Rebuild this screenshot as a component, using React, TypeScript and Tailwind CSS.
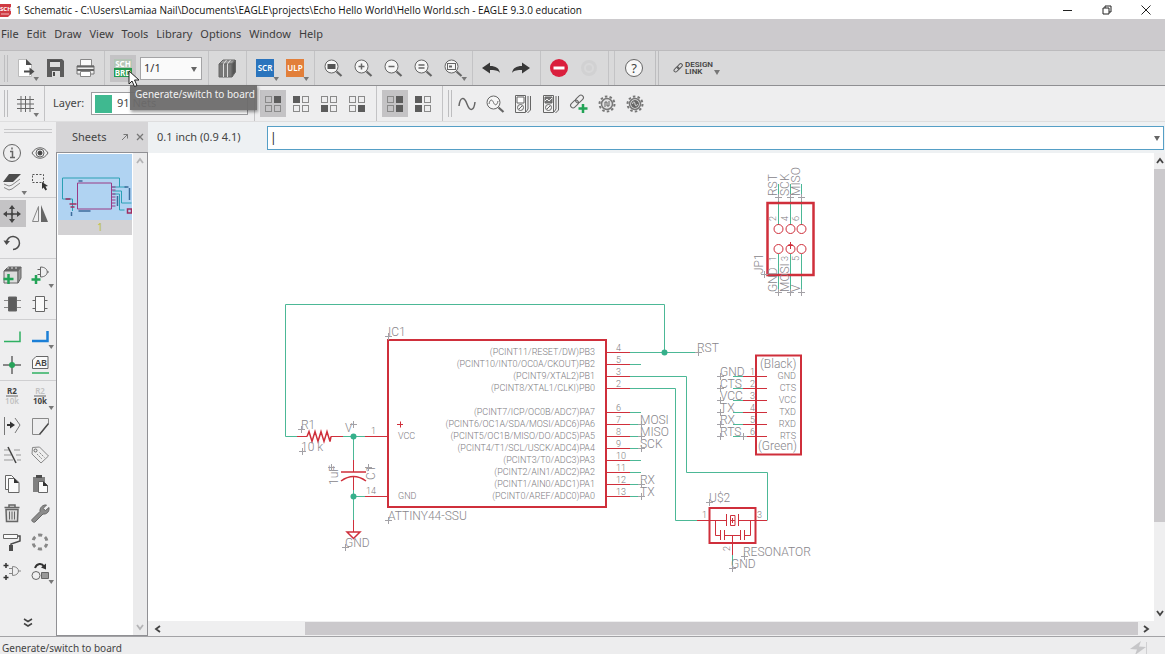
import type { ReactNode } from 'react'
import clsx from 'clsx'

const MENUS = ['File', 'Edit', 'Draw', 'View', 'Tools', 'Library', 'Options', 'Window', 'Help']

const CHIP_PINS = [
  { y: 352, no: '4', name: '(PCINT11/RESET/DW)PB3' },
  { y: 364, no: '5', name: '(PCINT10/INT0/OC0A/CKOUT)PB2' },
  { y: 376, no: '3', name: '(PCINT9/XTAL2)PB1' },
  { y: 388, no: '2', name: '(PCINT8/XTAL1/CLKI)PB0' },
  { y: 412, no: '6', name: '(PCINT7/ICP/OC0B/ADC7)PA7' },
  { y: 424, no: '7', name: '(PCINT6/OC1A/SDA/MOSI/ADC6)PA6', net: 'MOSI' },
  { y: 436, no: '8', name: '(PCINT5/OC1B/MISO/DO/ADC5)PA5', net: 'MISO' },
  { y: 448, no: '9', name: '(PCINT4/T1/SCL/USCK/ADC4)PA4', net: 'SCK' },
  { y: 460, no: '10', name: '(PCINT3/T0/ADC3)PA3' },
  { y: 472, no: '11', name: '(PCINT2/AIN1/ADC2)PA2' },
  { y: 484, no: '12', name: '(PCINT1/AIN0/ADC1)PA1', net: 'RX' },
  { y: 496, no: '13', name: '(PCINT0/AREF/ADC0)PA0', net: 'TX' },
]

const FTDI_PINS = [
  { y: 376, no: '1', net: 'GND', name: 'GND' },
  { y: 388, no: '2', net: 'CTS', name: 'CTS' },
  { y: 400, no: '3', net: 'VCC', name: 'VCC' },
  { y: 412, no: '4', net: 'TX', name: 'TXD' },
  { y: 424, no: '5', net: 'RX', name: 'RXD' },
  { y: 436, no: '6', net: 'RTS', name: 'RTS' },
]

const ISP_COLS = [
  { x: 778, top: 'RST', topNo: '2', bottomNo: '1', bottom: 'GND' },
  { x: 790, top: 'SCK', topNo: '4', bottomNo: '3', bottom: 'MOSI' },
  { x: 801, top: 'MISO', topNo: '6', bottomNo: '5', bottom: 'V' },
]

function Icon({ caret, children }: { caret?: boolean; children: ReactNode }) {
  return (
    <svg viewBox="0 0 24 24" className="size-6 shrink-0 overflow-visible" fill="none" stroke="#666" strokeWidth="1" aria-hidden>
      {children}
      {caret && <path d="M20.5 21h5.5l-2.75 4z" fill="#777" stroke="none" />}
    </svg>
  )
}

function Tool({
  label,
  active,
  caret,
  children,
}: {
  label: string
  active?: boolean
  caret?: boolean
  children: ReactNode
}) {
  return (
    <button
      type="button"
      aria-label={label}
      className={clsx('flex h-[27px] w-[26px] shrink-0 items-center justify-center', active && 'bg-[#c4c3c5]')}
    >
      <Icon caret={caret}>{children}</Icon>
    </button>
  )
}

function Sep() {
  return (
    <div className="flex h-full w-3 shrink-0 justify-center">
      <div className="w-px bg-[#c3c3c5]" />
    </div>
  )
}

function Grip({ className }: { className?: string }) {
  return <div className={clsx('h-[27px] w-1 shrink-0 border-x border-[#bdbdbf]', className)} />
}

function Lens({ children }: { children: ReactNode }) {
  return (
    <>
      <circle cx="10.5" cy="10.5" r="6.5" fill="#f6f6f6" />
      <path d="M15.5 15.5l5 4.500" strokeWidth="2.200" />
      {children}
    </>
  )
}

function Quad({ on }: { on: number[] }) {
  return (
    <>
      {[0, 1, 2, 3].map((i) => (
        <rect
          key={i}
          x={i % 2 ? 13.5 : 4.5}
          y={i > 1 ? 13.5 : 4.5}
          width="6"
          height="6"
          fill={on.includes(i) ? '#5c5c5c' : 'none'}
          stroke={on.includes(i) ? '#5c5c5c' : '#8a8a8a'}
        />
      ))}
    </>
  )
}

function Gear() {
  return (
    <>
      <circle cx="12" cy="12" r="7.500" stroke="#777" strokeWidth="2" strokeDasharray="2.500 2.212" />
      <circle cx="12" cy="12" r="5.500" fill="#e2e2e3" stroke="#777" strokeWidth="1.500" />
    </>
  )
}

function Meter({ dark }: { dark?: boolean }) {
  return (
    <>
      <path d="M4.500 3.500h10v17h-10z" fill="#f4f4f4" />
      <path d="M6 5h7v6h-7z" fill={dark ? '#777' : '#fff'} />
      {dark && <path d="M6 9l2-2 2 2 3-3" stroke="#eee" />}
      <circle cx="9.500" cy="15.500" r="3" />
      <path d="M8 17l3-3M17 4v13l-2 3M19.500 4v14l-3 3" />
    </>
  )
}

function LinkGlyph() {
  return (
    <>
      <rect x="3" y="9.500" width="9" height="5" rx="2.500" transform="rotate(-45 7.500 12)" />
      <rect x="8" y="4.500" width="9" height="5" rx="2.500" transform="rotate(-45 12.500 7)" />
    </>
  )
}

function SourceBadge({ text, fill }: { text: string; fill: string }) {
  return (
    <>
      <rect x="3" y="3" width="18" height="18" fill={fill} stroke="none" />
      <text x="12" y="15" textAnchor="middle" fontSize="8" fontWeight="600" fill="#fff" stroke="none">
        {text}
      </text>
    </>
  )
}

function TitleBar() {
  return (
    <header className="flex h-[19px] shrink-0 items-center bg-white text-[#111]">
      <svg viewBox="0 0 12 16" className="mr-1 h-4 w-3" aria-hidden>
        <path d="M0 2h11v10l-3 3H0z" fill="#cf3a42" />
        <text x="0" y="9" fontSize="6" fontWeight="700" fill="#fff">
          SCH
        </text>
        <path d="M1 12h8" stroke="#f2b5b8" />
      </svg>
      <h1 className="grow truncate font-['Open_Sans',sans-serif] text-[10px] leading-4">
        1 Schematic - C:\Users\Lamiaa Nail\Documents\EAGLE\projects\Echo Hello World\Hello World.sch - EAGLE 9.3.0 education
      </h1>
      <div className="flex h-full">
        <button type="button" aria-label="Minimize" className="flex w-[39px] items-center justify-center">
          <svg viewBox="0 0 10 10" className="size-[10px]" stroke="#222" aria-hidden>
            <path d="M0 5.500h9" />
          </svg>
        </button>
        <button type="button" aria-label="Restore" className="flex w-[39px] items-center justify-center">
          <svg viewBox="0 0 10 10" className="size-[10px]" fill="none" stroke="#222" aria-hidden>
            <path d="M1 3h6v6H1zM3 3V1h6v6H7" />
          </svg>
        </button>
        <button type="button" aria-label="Close" className="flex w-[39px] items-center justify-center">
          <svg viewBox="0 0 10 10" className="size-[10px]" stroke="#222" aria-hidden>
            <path d="M.5.5l9 9M9.500.5l-9 9" />
          </svg>
        </button>
      </div>
    </header>
  )
}

function MainToolbar() {
  return (
    <div className="flex h-[35px] shrink-0 items-center border-b border-[#8f8f92] bg-[#d9d9da]">
      <Grip className="mr-1 ml-1" />
      <div className="flex items-center gap-1">
        <Tool label="New" caret>
          <path d="M5.500 3.500h8l5 5v12h-13z" fill="#fff" stroke="#bbb" />
          <path d="M13 3v6h6z" fill="#4c4c4c" stroke="none" />
          <path d="M11 15.500h7" stroke="#4c4c4c" strokeWidth="2" />
          <path d="M16.500 11.500l5 4-5 4z" fill="#4c4c4c" stroke="none" />
        </Tool>
        <Tool label="Save">
          <path d="M4 3h15l2 2v16H4z" fill="#5c5c5c" stroke="none" />
          <path d="M7 4h10v7H7zM9 15h8v6H9z" fill="#ddd" stroke="none" />
          <path d="M7 5h10M11 16v4" stroke="#4c4c4c" strokeWidth="2" />
        </Tool>
        <Tool label="Print">
          <path d="M7.500 3.500h11v7h-11z" fill="#fafafa" stroke="#888" />
          <path d="M4 10h17v8H4z" fill="#eee" stroke="#777" />
          <path d="M4 10.500h17M4 14h17" stroke="#666" strokeWidth="2" />
          <path d="M7.500 15.500h10v5h-10z" fill="#fff" stroke="#888" />
        </Tool>
      </div>
      <Sep />
      <div className="relative flex items-center gap-1">
        <Tool label="Generate/switch to board" active>
          <rect x="3" y="3" width="18" height="9" fill="#b4c5b6" stroke="none" />
          <rect x="3" y="12" width="18" height="9" fill="#259a4d" stroke="none" />
          <text x="12" y="10.500" textAnchor="middle" fontSize="8" fontWeight="700" fill="#fff" stroke="none">
            SCH
          </text>
          <text x="12" y="19.500" textAnchor="middle" fontSize="8" fontWeight="700" fill="#fff" stroke="none">
            BRD
          </text>
        </Tool>
        <div className="relative">
          <select
            aria-label="Sheet"
            className="block h-[23px] w-[62px] appearance-none border border-[#a4a4a6] bg-[#fafafa] pl-[3px] text-[11px] text-[#333]"
          >
            <option>1/1</option>
          </select>
          <svg viewBox="0 0 6 5" className="pointer-events-none absolute top-[10px] right-[5px] h-[5px] w-[6px]" aria-hidden>
            <path d="M0 0h6L3 5z" fill="#666" />
          </svg>
        </div>
        <div
          role="tooltip"
          className="absolute top-[30px] left-5 z-10 h-[25px] w-[127px] bg-[#6d6b6c]/95 px-[5px] text-[10px] leading-[18px] whitespace-nowrap text-[#f2f2f2] shadow-[1px_2px_3px_rgba(0,0,0,0.4)]"
        >
          Generate/switch to board
        </div>
        <svg viewBox="0 0 12 18" className="absolute top-[15px] left-[18px] z-20 h-[18px] w-3" aria-hidden>
          <path d="M1 1v13l3-3 2.500 5.500 2.500-1-2.500-5.500h4.500z" fill="#fff" stroke="#222" />
        </svg>
      </div>
      <Sep />
      <Tool label="Library manager">
        <path d="M4 8l4-4h12l-3 4z" fill="#999" stroke="#666" />
        <path d="M4 8h13v13H4z" fill="#777" />
        <path d="M17 8l3.500-4v12L17 21z" fill="#555" />
        <path d="M8.500 8v13M12.500 8v13M8.500 8l3-4M12.500 8l3-4" stroke="#ddd" />
      </Tool>
      <Sep />
      <div className="flex items-center gap-1">
        <Tool label="Run script" caret>
          <SourceBadge text="SCR" fill="#2a74bd" />
        </Tool>
        <Tool label="Run ULP" caret>
          <SourceBadge text="ULP" fill="#e27f3a" />
        </Tool>
      </div>
      <Sep />
      <div className="flex items-center gap-1">
        <Tool label="Zoom to fit">
          <Lens>
            <rect x="6.500" y="8" width="8" height="5" fill="#555" stroke="none" />
          </Lens>
        </Tool>
        <Tool label="Zoom in">
          <Lens>
            <path d="M7.500 10.500h6M10.500 7.500v6" strokeWidth="1.500" />
          </Lens>
        </Tool>
        <Tool label="Zoom out">
          <Lens>
            <path d="M7.500 10.500h6" strokeWidth="1.500" />
          </Lens>
        </Tool>
        <Tool label="Redraw">
          <Lens>
            <path d="M7.500 9h6M7.500 12h6" strokeWidth="1.500" />
          </Lens>
        </Tool>
        <Tool label="Zoom select" caret>
          <Lens>
            <rect x="6.500" y="7.500" width="8" height="6" />
            <path d="M8 10.500h3" strokeWidth="2" />
          </Lens>
        </Tool>
      </div>
      <Sep />
      <div className="flex items-center gap-1">
        <Tool label="Undo">
          <path d="M3 12l8-5.500v3.500c6 0 9 2 10 7-2-3-6-3-10-3v3.500z" fill="#383838" stroke="none" />
        </Tool>
        <Tool label="Redo">
          <path d="M21 12l-8-5.500v3.500c-6 0-9 2-10 7 2-3 6-3 10-3v3.500z" fill="#383838" stroke="none" />
        </Tool>
      </div>
      <Sep />
      <div className="flex items-center gap-1">
        <Tool label="Stop">
          <circle cx="12" cy="12" r="9" fill="#da1f3d" stroke="none" />
          <path d="M6.500 12h11" stroke="#fff" strokeWidth="3" />
        </Tool>
        <Tool label="Go">
          <circle cx="12" cy="12" r="8" fill="#d1d1d2" stroke="none" />
          <circle cx="12" cy="12" r="4" stroke="#d8d8d9" strokeWidth="2" />
        </Tool>
      </div>
      <Sep />
      <div className="mr-[6px] h-full w-px bg-[#c3c3c5]" />
      <Tool label="Help">
        <circle cx="12" cy="12" r="8.500" fill="#f8f8f8" />
        <text x="12" y="16.500" textAnchor="middle" fontSize="13" fill="#444" stroke="none">
          ?
        </text>
      </Tool>
      <Grip className="ml-2 h-full" />
      <button type="button" className="ml-[14px] flex items-center">
        <svg viewBox="2 2 17 17" className="size-[11px]" fill="none" stroke="#555" strokeWidth="1.500" aria-hidden>
          <LinkGlyph />
        </svg>
        <span className="ml-px text-left font-['Roboto',sans-serif] text-[8px] leading-[7px] font-semibold text-[#444]">
          DESIGN
          <br />
          LINK
        </span>
        <svg viewBox="0 0 6 5" className="mt-2 ml-px h-[5px] w-[6px]" aria-hidden>
          <path d="M0 0h6L3 5z" fill="#777" />
        </svg>
      </button>
    </div>
  )
}

function ParameterBar() {
  return (
    <div className="flex h-9 shrink-0 items-center border-b border-[#dededf] bg-[#eeeeef]">
      <Grip className="mr-1 ml-1" />
      <Tool label="Grid" caret>
        <path d="M8 4v16M12.500 4v16M17 4v16M4 7.500h17M4 12h17M4 16.500h17" />
      </Tool>
      <Sep />
      <label htmlFor="layer" className="ml-[3px] w-[38px] text-[11px] text-[#444]">
        Layer:
      </label>
      <div className="relative flex h-[23px] w-[157px] items-center border border-[#9c9c9f] bg-white">
        <div className="mx-[3px] h-[18px] w-[17px] shrink-0 bg-[#3fb990]" />
        <select id="layer" className="h-full grow appearance-none pl-[2px] text-[11px] text-[#444]">
          <option>91 Nets</option>
        </select>
      </div>
      <Sep />
      <div className="flex items-center gap-[2px]">
        <Tool label="Top right" active>
          <Quad on={[1]} />
        </Tool>
        <Tool label="Top left">
          <Quad on={[0]} />
        </Tool>
        <Tool label="Bottom left">
          <Quad on={[2]} />
        </Tool>
        <Tool label="Bottom right">
          <Quad on={[3]} />
        </Tool>
      </div>
      <Sep />
      <div className="flex items-center gap-[2px]">
        <Tool label="Right side" active>
          <Quad on={[1, 3]} />
        </Tool>
        <Tool label="Left side">
          <Quad on={[0, 2]} />
        </Tool>
      </div>
      <Sep />
      <Grip className="mr-[2px]" />
      <div className="flex items-center gap-[2px]">
        <Tool label="Simulate">
          <path d="M4 14c1-9 5-10 8-2s7 7 8-2" strokeWidth="1.500" />
        </Tool>
        <Tool label="Probe">
          <Lens>
            <path d="M6 12c1-5 3-5 4.500-1.500s3.500 3 4.500-1.500" />
          </Lens>
        </Tool>
        <Tool label="Voltage probe">
          <Meter />
        </Tool>
        <Tool label="Current probe">
          <Meter dark />
        </Tool>
        <Tool label="Add model">
          <LinkGlyph />
          <path d="M16 12v9M11.500 16.500h9" stroke="#22a356" strokeWidth="2.500" />
        </Tool>
        <Tool label="Simulation setup">
          <Gear />
          <path d="M10 15V10h2v4h2V9" />
        </Tool>
        <Tool label="Simulation options">
          <Gear />
          <circle cx="12" cy="12" r="3.500" fill="#666" />
          <path d="M9.500 12c1-3 2-3 2.500 0s2 2 2.500 0" stroke="#ddd" />
        </Tool>
      </div>
    </div>
  )
}

function PaletteRow({ children }: { children: ReactNode }) {
  return <div className="flex h-[29px] items-center gap-px">{children}</div>
}

function PaletteSep() {
  return <div className="my-px h-px bg-[#cfcfd1]" />
}

function Palette() {
  return (
    <nav aria-label="Commands" className="flex w-14 shrink-0 flex-col overflow-hidden bg-[#eeeeef]">
      <div className="mx-1 mt-[7px] mb-[5px] h-1 shrink-0 border-y border-[#c9c9cb]" />
      <PaletteRow>
        <Tool label="Info">
          <circle cx="11" cy="12" r="8.500" />
          <path d="M9 10.500h2.500v5.500M9 16.500h5M11 6.500v2" strokeWidth="1.500" />
        </Tool>
        <Tool label="Show">
          <path d="M4 12c4-7 12-7 16 0-4 7-12 7-16 0z" />
          <circle cx="12" cy="12" r="4" />
          <circle cx="12" cy="12" r="2" fill="#444" stroke="#444" />
        </Tool>
      </PaletteRow>
      <PaletteRow>
        <Tool label="Layers" caret>
          <path d="M3 17.500l5 2.500 3-1 8-6M3 14l5 2 3-1 8-6" stroke="#888" />
          <path d="M8 4h12l-8 8H2z" fill="#4c4c4c" stroke="none" />
        </Tool>
        <Tool label="Group">
          <path d="M4.500 4.500h11v8h-11z" strokeDasharray="2 1.500" stroke="#555" />
          <path d="M14 12l6 4-2.500.5 1.500 3-1.500 1-2-3-1.500 1.500z" fill="#333" stroke="none" />
        </Tool>
      </PaletteRow>
      <PaletteSep />
      <PaletteRow>
        <Tool label="Move" active>
          <path d="M11 5v14M4 12h14" stroke="#444" strokeWidth="1.500" />
          <path d="M11 3l3 4H8zM11 21l3-4H8zM2 12l4-3v6zM20 12l-4-3v6z" fill="#444" stroke="none" />
          <circle cx="11" cy="12" r="1.500" fill="#444" stroke="none" />
        </Tool>
        <Tool label="Mirror">
          <path d="M10.500 4.500v15h-6z" stroke="#888" />
          <path d="M13 3l7 17h-7z" fill="#666" stroke="none" />
        </Tool>
      </PaletteRow>
      <PaletteRow>
        <Tool label="Rotate">
          <path d="M5.500 11.500a6.500 6.500 0 1 1 6.500 7" stroke="#4c4c4c" strokeWidth="1.500" />
          <path d="M2.500 9.500l3 4.500 3.500-4z" fill="#4c4c4c" stroke="none" />
        </Tool>
      </PaletteRow>
      <PaletteSep />
      <PaletteRow>
        <Tool label="Add part">
          <path d="M3 8l4-4h13l-3 4z" fill="#666" />
          <path d="M3 8h14v12H3z" fill="#ddd" />
          <path d="M17 8l3-4v11l-3 5z" fill="#999" />
          <path d="M6 5h12" stroke="#ddd" strokeDasharray="2 2" />
          <path d="M7.500 11v10M2.500 16h10" stroke="#22a356" strokeWidth="2.500" />
        </Tool>
        <Tool label="Add gate" caret>
          <path d="M12.500 4v10c9 0 9-10 0-10zM9.500 6.500h3M9.500 11.500h3M19 9h2" />
          <path d="M8 12v9M3.500 16.500h9" stroke="#22a356" strokeWidth="2.500" />
        </Tool>
      </PaletteRow>
      <PaletteRow>
        <Tool label="Replace">
          <path d="M3 8.500h17M3 15.500h17" stroke="#888" />
          <path d="M7.500 5h8v14h-8z" fill="#5c5c5c" />
        </Tool>
        <Tool label="Symbol">
          <path d="M4.500 8.500h15M4.500 16.500h15" />
          <path d="M7.500 4.500h9v15h-9z" fill="#fafafa" />
        </Tool>
      </PaletteRow>
      <PaletteSep />
      <PaletteRow>
        <Tool label="Net">
          <path d="M3 17.500h16v-10" stroke="#2fb062" strokeWidth="1.500" />
        </Tool>
        <Tool label="Bus" caret>
          <path d="M4 17h15.500V7" stroke="#1b7fd6" strokeWidth="2.500" />
        </Tool>
      </PaletteRow>
      <PaletteRow>
        <Tool label="Junction">
          <path d="M2 12h18M11 3v18" strokeWidth="1.500" />
          <circle cx="11" cy="12" r="3" fill="#27a35a" stroke="none" />
        </Tool>
        <Tool label="Label">
          <path d="M8 3.500h12v12H4.500V7z" fill="#fafafa" />
          <text x="13" y="13" textAnchor="middle" fontSize="9" fontWeight="600" fill="#444" stroke="none">
            AB
          </text>
          <path d="M4 20h17" stroke="#2fb062" strokeWidth="1.500" />
        </Tool>
      </PaletteRow>
      <PaletteSep />
      <PaletteRow>
        <Tool label="Name">
          <text x="11" y="9" textAnchor="middle" fontSize="8" fontWeight="700" fill="#444" stroke="none">
            R2
          </text>
          <text x="11" y="18.500" textAnchor="middle" fontSize="8" fontWeight="600" fill="#c2c2c2" stroke="none">
            10k
          </text>
          <path d="M5 11h12" />
        </Tool>
        <Tool label="Value" caret>
          <text x="12" y="9" textAnchor="middle" fontSize="8" fontWeight="600" fill="#c2c2c2" stroke="none">
            R2
          </text>
          <text x="12" y="18.500" textAnchor="middle" fontSize="8" fontWeight="700" fill="#444" stroke="none">
            10k
          </text>
          <path d="M6 11h12" />
        </Tool>
      </PaletteRow>
      <PaletteRow>
        <Tool label="Split">
          <path d="M3.500 3v18M14 4l5 7-5 8" stroke="#777" />
          <path d="M6 11h4" stroke="#333" strokeWidth="2" />
          <path d="M9 7.500l5 3.500-5 3.500z" fill="#333" stroke="none" />
        </Tool>
        <Tool label="Miter">
          <path d="M4.500 4.500h16v5l-9 11h-7z" stroke="#888" />
          <path d="M20.500 9.500l-9 11" stroke="#4c4c4c" strokeWidth="1.500" />
        </Tool>
      </PaletteRow>
      <PaletteRow>
        <Tool label="Slice">
          <path d="M3 7h5M13 7h6M3 12h7M15 12h5M3 17h9M16 17h4" stroke="#999" />
          <path d="M7 4l8 16" stroke="#444" strokeWidth="1.500" />
        </Tool>
        <Tool label="Attribute">
          <path d="M4.500 4.500l7-.5 9 9-7.500 7-9-9z" fill="#eee" stroke="#888" />
          <circle cx="7.500" cy="7.500" r="1.500" />
          <path d="M9 11l5 5M11.500 9.500l5 5" stroke="#888" strokeDasharray="2 1" />
        </Tool>
      </PaletteRow>
      <PaletteRow>
        <Tool label="Copy">
          <path d="M4.500 3.500h6l3 3v11h-9z" fill="#fafafa" />
          <path d="M7.500 6.500h6l4.500 4v10H7.500z" fill="#fafafa" />
          <path d="M13 6v5h5z" fill="#333" stroke="none" />
        </Tool>
        <Tool label="Paste">
          <path d="M5 5h12v15H5z" fill="#808080" stroke="none" />
          <path d="M8 3h6v3H8z" fill="#4c4c4c" stroke="none" />
          <path d="M10.500 9.500h5l4 4v7h-9z" fill="#fafafa" />
          <path d="M15 9v5h5z" fill="#333" stroke="none" />
        </Tool>
      </PaletteRow>
      <PaletteRow>
        <Tool label="Delete">
          <path d="M5 8.500h12l-.5 12h-11zM3.500 6.500h15M8 6V4h6v2" fill="#ddd" strokeWidth="1.500" />
          <path d="M8.500 10.500v8M11 10.500v8M13.500 10.500v8" />
        </Tool>
        <Tool label="Change">
          <path d="M4 18.500l8-8c-.5-4 3-7 6.500-6.500L15 7.500l2.500 2 3.500-3c.5 5-3 7-6 6.500l-8 8c-1.500 1-4-1-3-2.500z" fill="#8c8c8c" />
        </Tool>
      </PaletteRow>
      <PaletteRow>
        <Tool label="Paint roller">
          <path d="M2.500 4.500h14v4h-14z" fill="#fafafa" />
          <path d="M17 6h2v5l-9 3v2" stroke="#4c4c4c" strokeWidth="1.500" />
          <path d="M8 15h4v6H8z" fill="#4c4c4c" stroke="none" />
        </Tool>
        <Tool label="Array">
          <circle
            cx="12"
            cy="12"
            r="7"
            stroke="#888"
            strokeWidth="3"
            strokeDasharray="4 3.330"
            strokeDashoffset="2"
            transform="rotate(30 12 12)"
          />
        </Tool>
      </PaletteRow>
      <PaletteRow>
        <Tool label="Gate swap">
          <path d="M5 4v5M2.500 6.500h5M5 16v5M2.500 18.500h5" stroke="#333" strokeWidth="1.500" />
          <path d="M11.500 7.500v9c8 0 8-9 0-9zM8 9.500h3M8 14.500h3M17 12h3" stroke="#888" />
        </Tool>
        <Tool label="Swap" caret>
          <circle cx="8" cy="16.500" r="4" />
          <path d="M13.500 13.500h7v6h-7z" fill="#999" />
          <path d="M7 9c2-5 7-5 9-1.500" stroke="#333" strokeWidth="2" />
          <path d="M18 4.500v6l-5-2z" fill="#333" stroke="none" />
        </Tool>
      </PaletteRow>
      <button type="button" aria-label="More commands" className="mt-auto mb-2 flex justify-center">
        <svg viewBox="0 0 10 10" className="size-[10px]" fill="none" stroke="#444" strokeWidth="1.500" aria-hidden>
          <path d="M1 1l4 2.500L9 1M1 5.500L5 8l4-2.500" />
        </svg>
      </button>
    </nav>
  )
}

function Chevron({ d, faint }: { d: string; faint?: boolean }) {
  return (
    <svg viewBox="0 0 8 8" className="size-2" fill="none" stroke={faint ? '#b4b4b6' : '#444'} strokeWidth="1.800" aria-hidden>
      <path d={d} />
    </svg>
  )
}

const UP = 'M1 6l3-4 3 4'
const DOWN = 'M1 2l3 4 3-4'
const LEFT = 'M6 1L2 4l4 3'
const RIGHT = 'M2 1l4 3-4 3'

function SheetsPanel() {
  return (
    <aside className="flex w-[92px] shrink-0 flex-col">
      <div className="flex h-[30px] shrink-0 items-center bg-[#d6d5d7] pl-4 text-[#444]">
        <h2 className="grow text-[11px]">Sheets</h2>
        <button type="button" aria-label="Undock" className="mr-[7px]">
          <svg viewBox="0 0 8 8" className="size-2" fill="none" stroke="#777" aria-hidden>
            <path d="M1 7l5.500-5.500M2.500 1.500h4v4" />
          </svg>
        </button>
        <button type="button" aria-label="Close panel" className="mr-[4px]">
          <svg viewBox="0 0 8 8" className="size-2" fill="none" stroke="#777" strokeWidth="1.300" aria-hidden>
            <path d="M1 1l6 6M7 1L1 7" />
          </svg>
        </button>
      </div>
      <div className="flex min-h-0 grow border border-[#909094] bg-white">
        <div className="grow p-px">
          <button type="button" className="block w-full bg-[#d3d2d4] text-[10px] leading-[15px] text-[#bcc03c]">
            <svg viewBox="0 0 73 66" className="block h-[66px] w-full bg-[#b0d3f2]" fill="none" aria-hidden>
              <path d="M4 45V24h57v9M53 33h15M54 37h9v12h10M54 40h7v16h5M4 45h10M14 45v12" stroke="#2aa0b4" />
              <path d="M19 29h34v26H19zM53 33h4M53 36h4M53 40h4M53 43h4M53 46h4M53 49h4M53 52h4" stroke="#9a3b86" />
              <path d="M7 45h5M11 50h7M12 53h4M69 55h4v4h-4z" stroke="#a02c60" strokeWidth="1.500" />
              <path d="M20 27h4M20 57h12M59 42v10M71 34v12M13 58v4M66 33h4" stroke="#3c6c9c" strokeWidth="1.500" />
            </svg>
            <span className="block pl-[10px] text-center">1</span>
          </button>
        </div>
        <div className="flex w-[14px] shrink-0 flex-col items-center justify-between bg-[#ebebec] py-1">
          <Chevron d={UP} faint />
          <Chevron d={DOWN} faint />
        </div>
      </div>
    </aside>
  )
}

// small origin marker used by labels and part names
function Cross({ x, y }: { x: number; y: number }) {
  return <path d={`M${x - 3} ${y + 0.5}h7M${x + 0.5} ${y - 3}v7`} stroke="#a3a1a6" />
}

function Up({ x, y, size, children }: { x: number; y: number; size?: number; children: ReactNode }) {
  return (
    <text fontSize={size ?? 12} transform={`translate(${x} ${y}) rotate(-90)`}>
      {children}
    </text>
  )
}

function Schematic() {
  return (
    <svg
      viewBox="148 153 1006 468"
      className="block h-full w-full font-['Roboto',sans-serif] font-light"
      role="img"
      aria-label="Hello World schematic"
    >
      {/* nets */}
      <g fill="none" stroke="#4cb896">
        <path d="M297 436.500H285.500V304.500H664.500V352.500M630 352.500H699M630 376.500H686.500V472.500H767.500V520.500M630 388.500H675.500V520.500H697" />
        <path d="M343 436.500H365M353.500 436V460M353.500 490V520M353.500 496.500H365M732.500 555V568" />
        {CHIP_PINS.filter((p) => p.y === 364 || p.y > 400).map((p) => (
          <path key={p.no} d={`M630 ${p.y + 0.5}h11`} />
        ))}
        {FTDI_PINS.map((p) => (
          <path key={p.no} d={`M733 ${p.y + 0.5}h10`} />
        ))}
        {ISP_COLS.map((c) => (
          <path key={c.x} d={`M${c.x + 0.5} 184v41M${c.x + 0.5} 254v41`} />
        ))}
      </g>
      <g fill="#35b08b">
        <circle cx="664.500" cy="352.500" r="3" />
        <circle cx="353.500" cy="436.500" r="3" />
        <circle cx="353.500" cy="496.500" r="3" />
      </g>

      {/* symbols */}
      <g fill="none" stroke="#cf2f3b">
        <rect x="388" y="340" width="218" height="167" strokeWidth="2" />
        {CHIP_PINS.map((p) => (
          <path key={p.no} d={`M606 ${p.y + 0.5}h24`} />
        ))}
        <path d="M365 436.500h23M365 496.500h23M397 424.500h6M400.500 421.500v6" />
        <path d="M297 436.500h10M331 436.500h12" />
        <path d="M307 436.500l2-5 3 10 3-10 3 10 3-10 3 10 3-10 3 10 1-5" strokeWidth="1.500" />
        <path d="M353.500 460v12M353.500 476v14M353.500 520v12" />
        <path d="M341 472h25M341 481q12.500-9 25 0" strokeWidth="1.500" />
        <path d="M347 532h13l-6.500 6.500z" strokeWidth="1.500" />

        <rect x="767.500" y="203" width="46" height="72" strokeWidth="2.500" />
        {ISP_COLS.map((c) => (
          <g key={c.x}>
            <circle cx={c.x + 0.5} cy="229" r="4.500" />
            <circle cx={c.x + 0.5} cy="249" r="4.500" />
          </g>
        ))}
        <path d="M790.500 242v7M788 245.500h5" />

        <rect x="756" y="355.500" width="45" height="99" strokeWidth="2" />
        {FTDI_PINS.map((p) => (
          <path key={p.no} d={`M743 ${p.y + 0.5}h24`} />
        ))}

        <rect x="709.500" y="508" width="46" height="35" strokeWidth="2" />
        <path d="M697 520.500h29M739 520.500h28M726.500 514v12M738.500 514v12M730.500 515.500h4.500v10h-4.500zM731 520.500h4M732.500 518v5" />
        <path d="M715.500 520v15.500h5M750.500 520v15.500h-6M720.500 530v10M724.500 530v10M740.500 530v10M744.500 530v10M724.500 535.500h16M732.500 535v20" />
      </g>

      {/* pin names and numbers */}
      <g fill="#7d7b80" fontSize="9">
        {CHIP_PINS.map((p) => (
          <g key={p.no}>
            <text x="595" y={p.y + 3} textAnchor="end">
              {p.name}
            </text>
            <text x="616" y={p.y - 1}>
              {p.no}
            </text>
          </g>
        ))}
        {FTDI_PINS.map((p) => (
          <g key={p.no}>
            <text x="796" y={p.y + 3} textAnchor="end">
              {p.name}
            </text>
            <text x="750" y={p.y - 1}>
              {p.no}
            </text>
          </g>
        ))}
        {ISP_COLS.map((c) => (
          <g key={c.x}>
            <Up x={c.x - 2} y={221} size={9}>
              {c.topNo}
            </Up>
            <Up x={c.x - 2} y={261} size={9}>
              {c.bottomNo}
            </Up>
          </g>
        ))}
        <text x="398" y="439">
          VCC
        </text>
        <text x="398" y="499">
          GND
        </text>
        <text x="371" y="434">
          1
        </text>
        <text x="366" y="494">
          14
        </text>
        <text x="702" y="518">
          1
        </text>
        <text x="757" y="518">
          3
        </text>
        <Up x={730} y={551} size={9}>
          2
        </Up>
      </g>

      {/* part names, values and net labels */}
      <g fill="#88868b" fontSize="12">
        <text x="388" y="336">
          IC1
        </text>
        <text x="388" y="520">
          ATTINY44-SSU
        </text>
        <text x="301" y="429">
          R1
        </text>
        <text x="301" y="451">
          10 k
        </text>
        <text x="345" y="432">
          V
        </text>
        <text x="345" y="547">
          GND
        </text>
        <Up x={338} y={485}>
          1uF
        </Up>
        <Up x={375} y={480}>
          C1
        </Up>
        <text x="697" y="352">
          RST
        </text>
        {CHIP_PINS.filter((p) => p.net).map((p) => (
          <text key={p.no} x="640" y={p.y}>
            {p.net}
          </text>
        ))}
        {FTDI_PINS.map((p) => (
          <text key={p.no} x="720" y={p.y}>
            {p.net}
          </text>
        ))}
        <text x="760" y="368">
          (Black)
        </text>
        <text x="758" y="450">
          (Green)
        </text>
        {ISP_COLS.map((c) => (
          <g key={c.x}>
            <Up x={c.x - 1} y={196}>
              {c.top}
            </Up>
            <Up x={c.x - 1} y={292}>
              {c.bottom}
            </Up>
          </g>
        ))}
        <Up x={763} y={274}>
          JP1
        </Up>
        <text x="709" y="502">
          U$2
        </text>
        <text x="743" y="556">
          RESONATOR
        </text>
        <text x="731" y="568">
          GND
        </text>
      </g>

      <g fill="none">
        {CHIP_PINS.filter((p) => p.net).map((p) => (
          <Cross key={p.no} x={641} y={p.y} />
        ))}
        {FTDI_PINS.map((p) => (
          <Cross key={p.no} x={720} y={p.y} />
        ))}
        {ISP_COLS.map((c) => (
          <g key={c.x}>
            <Cross x={c.x} y={197} />
            <Cross x={c.x} y={292} />
          </g>
        ))}
        <Cross x={388} y={336} />
        <Cross x={388} y={520} />
        <Cross x={301} y={429} />
        <Cross x={302} y={451} />
        <Cross x={353} y={424} />
        <Cross x={345} y={547} />
        <Cross x={331} y={467} />
        <Cross x={368} y={467} />
        <Cross x={698} y={352} />
        <Cross x={764} y={274} />
        <Cross x={743} y={436} />
        <Cross x={709} y={502} />
        <Cross x={744} y={556} />
        <Cross x={732} y={568} />
      </g>
    </svg>
  )
}

function Editor() {
  return (
    <main className="flex min-w-0 grow flex-col">
      <div className="flex h-[31px] shrink-0 items-center bg-[#eef1f3] pr-px pl-[9px]">
        <output className="w-[110px] shrink-0 text-[11px] text-[#444]">0.1 inch (0.9 4.1)</output>
        <div className="relative grow">
          <input
            type="text"
            aria-label="Command line"
            defaultValue="|"
            className="block h-6 w-full border border-[#559fc6] bg-white pl-[2px] text-[12px] text-[#222] outline-none"
          />
          <svg viewBox="0 0 6 5" className="absolute top-[10px] right-[4px] h-[5px] w-[6px]" aria-hidden>
            <path d="M0 0h6L3 5z" fill="#666" />
          </svg>
        </div>
      </div>
      <div className="flex min-h-0 grow">
        <div className="min-w-0 grow bg-white">
          <Schematic />
        </div>
        <div className="flex w-[11px] shrink-0 flex-col items-center bg-[#efeff0] py-1">
          <Chevron d={UP} />
          <div className="my-1 flex w-full grow flex-col">
            <div className="h-[81%] bg-[#cbc9cc]" />
          </div>
          <Chevron d={DOWN} />
        </div>
      </div>
      <div className="flex h-[15px] shrink-0 items-center bg-[#efeff0] pr-[15px] pl-[6px]">
        <Chevron d={LEFT} />
        <div className="mx-1 flex h-full grow justify-end py-px">
          <div className="h-full w-6/7 bg-[#cbc9cc]" />
        </div>
        <Chevron d={RIGHT} />
      </div>
    </main>
  )
}

export default function App() {
  return (
    <div className="flex h-screen flex-col overflow-hidden bg-[#eeeeef] font-['Noto_Sans',sans-serif] text-[#333]">
      <TitleBar />
      <div role="menubar" className="flex h-8 shrink-0 items-center gap-2 border-b border-[#bcbbbd] bg-[#cccacd] pl-px">
        {MENUS.map((name) => (
          <button key={name} type="button" role="menuitem" className="text-[11px] text-[#3c3c3c]">
            {name}
          </button>
        ))}
      </div>
      <MainToolbar />
      <ParameterBar />
      <div className="flex min-h-0 grow">
        <Palette />
        <SheetsPanel />
        <Editor />
      </div>
      <footer className="flex h-[18px] shrink-0 items-center border-t border-[#a3a3a6] bg-[#ededee] pt-[5px] pl-[2px]">
        <p className="grow text-[10px] leading-3 text-[#444]">Generate/switch to board</p>
        <svg viewBox="0 0 16 16" className="size-4" aria-hidden>
          <path d="M11 1L0 9l7 .5L5 15l11-8-7-.5z" fill="#c6c6c8" />
        </svg>
        <div className="mr-[18px] h-full w-px bg-[#d0d0d2]" />
      </footer>
    </div>
  )
}
